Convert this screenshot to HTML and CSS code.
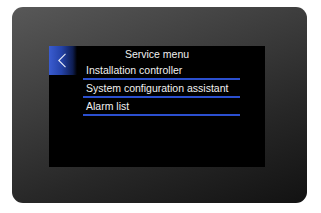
FILE: index.html
```html
<!DOCTYPE html>
<html>
<head>
<meta charset="utf-8">
<link rel="stylesheet" href="styles.css">
</head>
<body>
<div class="device">
  <div class="screen">
    <div class="back">
      <svg width="10" height="15" viewBox="0 0 10 15"><path d="M8.5 0.8 L1.8 7.5 L8.5 14.2" fill="none" stroke="#e8ecf6" stroke-width="1.1"/></svg>
    </div>
    <div class="title">Service menu</div>
    <ul class="menu">
      <li class="item">Installation controller</li>
      <li class="item">System configuration assistant</li>
      <li class="item">Alarm list</li>
    </ul>
  </div>
</div>
</body>
</html>
```
FILE: styles.css
```css
html, body {
  margin: 0;
  padding: 0;
  background: #ffffff;
}
body {
  width: 321px;
  height: 213px;
  overflow: hidden;
  font-family: "Liberation Sans", Arial, sans-serif;
}
.device {
  margin: 7px 0 0 12px;
  width: 295px;
  height: 196px;
  box-sizing: border-box;
  padding: 39px 0 0 37px;
  border-radius: 11px;
  background: linear-gradient(160deg, #585858 0%, #3e3e3e 35%, #282828 65%, #121212 100%);
}
.screen {
  width: 216px;
  height: 121px;
  background: #000;
  display: grid;
  grid-template-columns: 28px 6px 157px 1fr;
  grid-template-rows: 16px 13px auto;
  align-content: start;
}
.back {
  grid-column: 1 / 2;
  grid-row: 1 / 3;
  background: linear-gradient(90deg, #3a5cd0 0%, #2442a8 45%, #0e1d50 85%, #000 100%);
  display: flex;
  align-items: center;
  justify-content: center;
  padding-right: 2px;
}
.back svg { display: block; }
.title {
  grid-column: 1 / 5;
  grid-row: 1 / 2;
  text-align: center;
  color: #f0f0f0;
  font-size: 10.5px;
  line-height: 16px;
}
.menu {
  grid-column: 3 / 4;
  grid-row: 2 / 4;
  list-style: none;
  margin: 0;
  padding: 0;
}
.item {
  height: 16px;
  line-height: 16px;
  border-bottom: 2px solid #2b4fcf;
  color: #f0f0f0;
  font-size: 10.5px;
  padding-left: 3px;
  white-space: nowrap;
}
```
